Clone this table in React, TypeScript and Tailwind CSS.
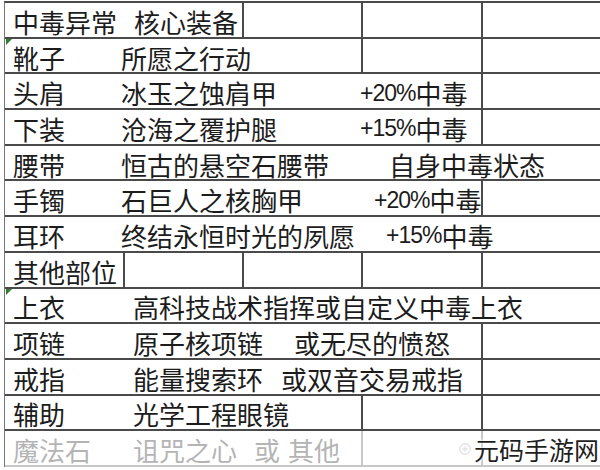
import React from 'react'

type Part = { text: string; w?: string; latin?: string }
type Row = {
  parts: Part[]
  lines: number[]
  mark?: boolean
  grey?: boolean
}

// 每行：文字从A列溢出；lines 为有右边框的列序号
const rows: Row[] = [
  { parts: [{ text: '中毒异常', w: 'w-[121px]' }, { text: '核心装备' }], lines: [1, 2, 3] },
  { parts: [{ text: '靴子', w: 'w-[108px]' }, { text: '所愿之行动' }], lines: [2, 3], mark: true },
  { parts: [{ text: '头肩', w: 'w-[108px]' }, { text: '冰玉之蚀肩甲', w: 'w-[239px]' }, { text: '中毒', latin: '+20%' }], lines: [3] },
  { parts: [{ text: '下装', w: 'w-[108px]' }, { text: '沧海之覆护腿', w: 'w-[239px]' }, { text: '中毒', latin: '+15%' }], lines: [3] },
  { parts: [{ text: '腰带', w: 'w-[108px]' }, { text: '恒古的悬空石腰带', w: 'w-[268px]' }, { text: '自身中毒状态' }], lines: [] },
  { parts: [{ text: '手镯', w: 'w-[108px]' }, { text: '石巨人之核胸甲', w: 'w-[253px]' }, { text: '中毒', latin: '+20%' }], lines: [3] },
  { parts: [{ text: '耳环', w: 'w-[108px]' }, { text: '终结永恒时光的夙愿', w: 'w-[265px]' }, { text: '中毒', latin: '+15%' }], lines: [] },
  { parts: [{ text: '其他部位' }], lines: [0, 1, 2, 3] },
  { parts: [{ text: '上衣', w: 'w-[120px]' }, { text: '高科技战术指挥或自定义中毒上衣' }], lines: [], mark: true },
  { parts: [{ text: '项链', w: 'w-[120px]' }, { text: '原子核项链', w: 'w-[161px]' }, { text: '或无尽的愤怒' }], lines: [3] },
  { parts: [{ text: '戒指', w: 'w-[120px]' }, { text: '能量搜索环', w: 'w-[148px]' }, { text: '或双音交易戒指' }], lines: [3] },
  { parts: [{ text: '辅助', w: 'w-[120px]' }, { text: '光学工程眼镜' }], lines: [2, 3] },
  { parts: [{ text: '魔法石', w: 'w-[120px]' }, { text: '诅咒之心', w: 'w-[121px]' }, { text: '或', w: 'w-[34px]' }, { text: '其他' }], lines: [2, 3], grey: true },
]

const cellWidths = ['w-[120px]', 'w-[119px]', 'w-[119px]', 'w-[120px]', 'flex-1']

const SheetRow = ({ row }: { row: Row }) => {
  const lineColor = row.grey ? 'border-[#c8c8c8]' : 'border-[#4a4a4a]'
  return (
    <div className={`relative flex h-[35.7px] border-b-2 ${lineColor}`}>
      {cellWidths.map((w, i) => (
        <div
          key={i}
          className={`${w} shrink-0 h-full ${row.lines.includes(i) ? 'border-r-2' : ''} ${lineColor}`}
        >
          {i === 0 && (
            <div
              className={`flex h-full items-center whitespace-nowrap pl-[8px] pt-1 text-[26px] leading-none ${
                row.grey ? 'text-[#b4b4b4]' : 'text-[#1c1c1c]'
              }`}
            >
              {row.parts.map((p, j) => (
                <span key={j} className={`${p.w ?? ''} shrink-0 flex items-center`}>
                  {p.latin && (
                    <span className="font-['Liberation_Sans',sans-serif] text-[23px] tracking-[-1px]">{p.latin}</span>
                  )}
                  {p.text}
                </span>
              ))}
            </div>
          )}
        </div>
      ))}
      {row.mark && (
        <div className="absolute left-[1px] top-0 h-0 w-0 border-t-[6px] border-r-[6px] border-t-[#2e7d32] border-r-transparent" />
      )}
    </div>
  )
}

export default function App() {
  return (
    <div className="relative h-[470px] w-[600px] overflow-hidden bg-white font-['Noto_Sans_CJK_SC','Noto_Sans',sans-serif]">
      <div className="ml-[4px] mt-[1px] border-l border-t-2 border-[#4a4a4a] border-l-[#777]">
        {rows.map((row, i) => (
          <SheetRow key={i} row={row} />
        ))}
      </div>

      {/* 水印 */}
      <svg width="14" height="14" viewBox="0 0 16 16" className="absolute left-[458px] top-[442px] opacity-40">
        <circle cx="8" cy="8" r="6" fill="none" stroke="#bbb" strokeWidth="1.5" />
        <path d="M5 8h6M8 5v6" stroke="#bbb" strokeWidth="1.5" />
      </svg>
      <span className="absolute left-[474px] top-[437px] whitespace-nowrap text-[25px] leading-none text-[#1e1e1e] [text-shadow:0_0_3px_#fff,0_0_3px_#fff]">
        元码手游网
      </span>
    </div>
  )
}
